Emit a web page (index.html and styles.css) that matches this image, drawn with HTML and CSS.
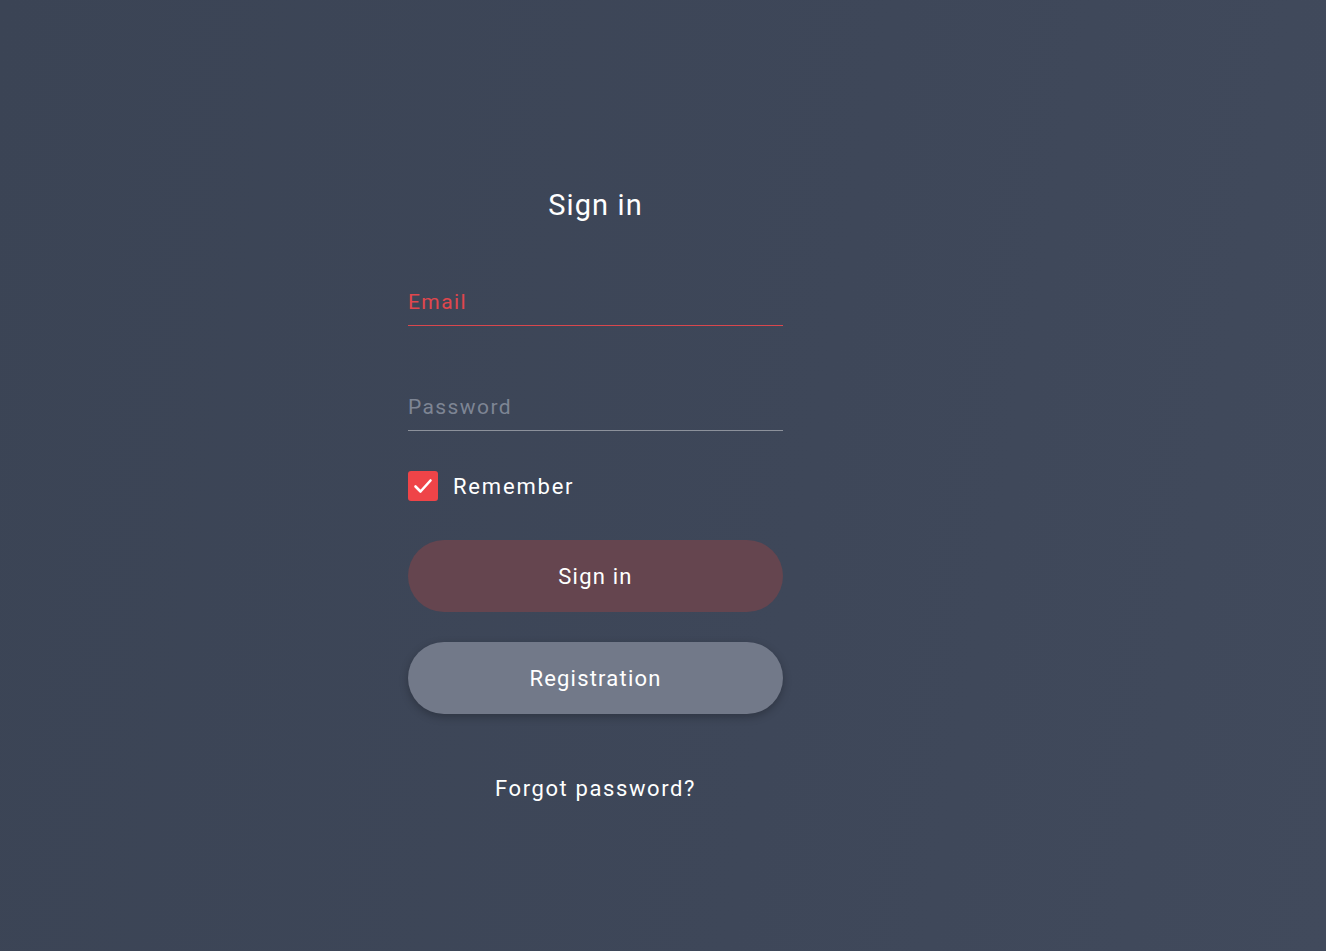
FILE: index.html
```html
<!DOCTYPE html>
<html lang="en">
  <head>
    <meta charset="UTF-8" />
    <meta name="viewport" content="width=device-width, initial-scale=1.0" />
    <title>Sign in</title>
    <link rel="stylesheet" href="styles.css">
  </head>
  <body>
    <div class="page">
      <form class="login-form">
        <h1>Sign in</h1>

        <label class="field field-active">
          <span class="field-label">Email</span>
        </label>

        <label class="field">
          <span class="field-label">Password</span>
        </label>

        <label class="remember">
          <span class="checkbox">
            <svg width="30" height="30" viewBox="0 0 30 30">
              <polyline points="7.5,15.5 12.5,20.5 22.5,9.5" fill="none" stroke="#fff" stroke-width="2.6" stroke-linecap="round" stroke-linejoin="round" />
            </svg>
          </span>
          Remember
        </label>

        <button type="button" class="btn btn-signin">Sign in</button>
        <button type="button" class="btn btn-register">Registration</button>

        <a class="forgot" href="#">Forgot password?</a>
      </form>
    </div>
  </body>
</html>
```

FILE: styles.css
```css
body {
  margin: 0;
  background: linear-gradient(100deg, #3b4455 0%, #3e4759 60%, #414a5c 100%);
  color: #fff;
  font-family: Roboto, "Noto Sans", sans-serif;
  min-height: 951px;
}

.page {
  display: flex;
  justify-content: center;
  padding-top: 189px;
  padding-right: 135px;
}

.login-form {
  width: 375px;
  display: flex;
  flex-direction: column;
}

h1 {
  margin: 0;
  text-align: center;
  font-size: 29px;
  font-weight: 400;
  line-height: 32px;
  letter-spacing: 1.1px;
}

.field {
  display: block;
  padding-top: 20px;
  padding-bottom: 11px;
  border-bottom: 1px solid #8c919b;
  margin-top: 49px;
}

.field-label {
  display: block;
  font-size: 21px;
  line-height: 24px;
  color: #7e8594;
  letter-spacing: 1.4px;
}

.field-active {
  border-bottom-color: #d9474d;
}

.field-active .field-label {
  color: #e0474d;
}

.remember {
  display: flex;
  align-items: center;
  margin-top: 40px;
  height: 30px;
  font-size: 22px;
  letter-spacing: 1.8px;
  gap: 15px;
}

.checkbox {
  width: 30px;
  height: 30px;
  border-radius: 3px;
  background-color: #ef4448;
  display: block;
}

.checkbox svg {
  display: block;
}

.btn {
  height: 72px;
  border: none;
  border-radius: 36px;
  color: #fff;
  font-family: Roboto, "Noto Sans", sans-serif;
  font-size: 22px;
  letter-spacing: 1.2px;
  cursor: pointer;
}

.btn-signin {
  margin-top: 39px;
  background-color: #65454f;
}

.btn-register {
  margin-top: 30px;
  background-color: #727989;
  box-shadow: 0 3px 8px rgba(0, 0, 0, 0.25);
}

.forgot {
  margin-top: 62px;
  text-align: center;
  color: #fff;
  text-decoration: none;
  font-size: 22px;
  line-height: 26px;
  letter-spacing: 1.6px;
}
```
